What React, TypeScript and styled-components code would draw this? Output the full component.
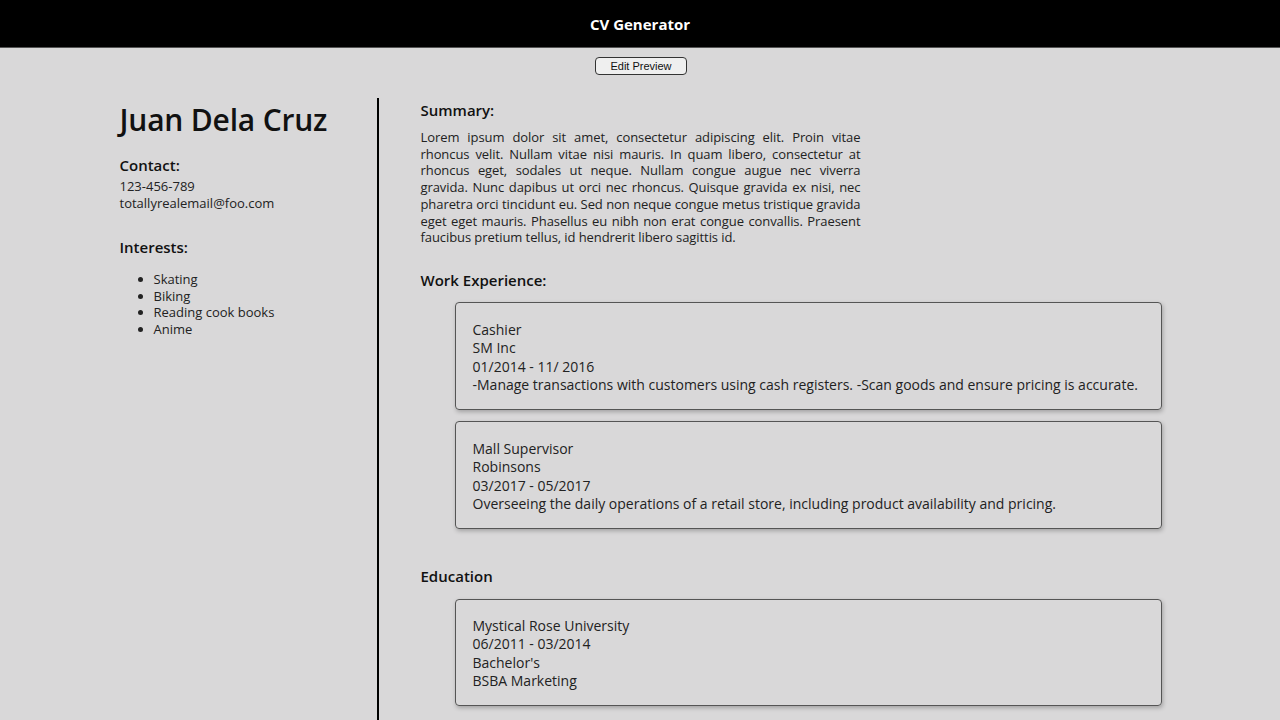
import React from "react";
import styled, { createGlobalStyle } from "styled-components";

const GlobalStyle = createGlobalStyle`
  html { scrollbar-width: none; }
  html::-webkit-scrollbar, body::-webkit-scrollbar { display: none; }
  body {
    margin: 0;
    background: #d9d8d9;
    font-family: "Open Sans", "Noto Sans", sans-serif;
    color: #222;
  }
`;

const Header = styled.header`
  height: 48px;
  background: #000;
  color: #fff;
  display: flex;
  align-items: center;
  justify-content: center;
  font-size: 15px;
  font-weight: 700;
  border-bottom: 1px solid #555;
  box-sizing: border-box;
`;

const Toolbar = styled.div`
  display: flex;
  justify-content: center;
  padding-top: 9px;
`;

const Button = styled.button`
  font-family: "Liberation Sans", Arial, sans-serif;
  font-size: 11px;
  height: 18px;
  width: 92px;
  padding: 0;
  background: #efefef;
  border: 1.5px solid #333;
  border-radius: 4px;
  color: #111;
  margin-left: 2px;
`;

const Main = styled.main`
  width: 1043px;
  margin: 23px auto 0;
  display: flex;
  align-items: stretch;
`;

const Left = styled.aside`
  width: 257px;
  padding-left: 1px;
  flex-shrink: 0;
  border-right: 2px solid #000;
  min-height: 640px;
`;

const Name = styled.h1`
  margin: 0;
  padding-top: 2px;
  font-size: 30px;
  line-height: 40px;
  font-weight: 600;
  color: #111;
  letter-spacing: -0.2px;
`;

const SectionTitle = styled.h2<{ $top: number }>`
  margin: ${(p) => p.$top}px 0 0;
  font-size: 15px;
  line-height: 20px;
  font-weight: 600;
  color: #111;
`;

const ContactInfo = styled.div`
  margin-top: 3px;
  font-size: 13px;
  line-height: 17px;
  color: #222;
`;

const List = styled.ul`
  margin: 14px 0 0;
  padding-left: 34px;
  font-size: 13px;
  line-height: 16.7px;
  color: #222;
`;

const Right = styled.section`
  flex: 1;
  padding-left: 42px;
`;

const Paragraph = styled.p`
  margin: 9px 0 0;
  width: 440px;
  text-align: justify;
  font-size: 13px;
  line-height: 16.7px;
  letter-spacing: -0.08px;
  color: #222;
`;

const Card = styled.div<{ $top: number; $padTop: number }>`
  margin: ${(p) => p.$top}px 0 0 34px;
  border: 1.5px solid #555;
  border-radius: 4px;
  box-shadow: 1px 2px 4px rgba(0, 0, 0, 0.25);
  padding: ${(p) => p.$padTop}px 16px 14px 17px;
  font-size: 14px;
  line-height: 18.5px;
  color: #222;
`;

const works = [
  {
    title: "Cashier",
    company: "SM Inc",
    dates: "01/2014 - 11/ 2016",
    desc: "-Manage transactions with customers using cash registers. -Scan goods and ensure pricing is accurate.",
  },
  {
    title: "Mall Supervisor",
    company: "Robinsons",
    dates: "03/2017 - 05/2017",
    desc: "Overseeing the daily operations of a retail store, including product availability and pricing.",
  },
];

export default function App() {
  return (
    <>
      <GlobalStyle />
      <Header>CV Generator</Header>
      <Toolbar>
        <Button>Edit Preview</Button>
      </Toolbar>
      <Main>
        <Left>
          <Name>Juan Dela Cruz</Name>
          <SectionTitle $top={15}>Contact:</SectionTitle>
          <ContactInfo>
            <div>123-456-789</div>
            <div>totallyrealemail@foo.com</div>
          </ContactInfo>
          <SectionTitle $top={25}>Interests:</SectionTitle>
          <List>
            <li>Skating</li>
            <li>Biking</li>
            <li>Reading cook books</li>
            <li>Anime</li>
          </List>
        </Left>
        <Right>
          <SectionTitle $top={2}>Summary:</SectionTitle>
          <Paragraph>
            Lorem ipsum dolor sit amet, consectetur adipiscing elit. Proin vitae rhoncus velit. Nullam vitae nisi mauris. In quam libero, consectetur at rhoncus eget, sodales ut neque. Nullam congue augue nec viverra gravida. Nunc dapibus ut orci nec rhoncus. Quisque gravida ex nisi, nec pharetra orci tincidunt eu. Sed non neque congue metus tristique gravida eget eget mauris. Phasellus eu nibh non erat congue convallis. Praesent faucibus pretium tellus, id hendrerit libero sagittis id.
          </Paragraph>
          <SectionTitle $top={24}>Work Experience:</SectionTitle>
          {works.map((w, i) => (
            <Card key={w.title} $top={i === 0 ? 12 : 11} $padTop={18}>
              <div>{w.title}</div>
              <div>{w.company}</div>
              <div>{w.dates}</div>
              <div>{w.desc}</div>
            </Card>
          ))}
          <SectionTitle $top={37}>Education</SectionTitle>
          <Card $top={13} $padTop={17}>
            <div>Mystical Rose University</div>
            <div>06/2011 - 03/2014</div>
            <div>Bachelor's</div>
            <div>BSBA Marketing</div>
          </Card>
        </Right>
      </Main>
    </>
  );
}
